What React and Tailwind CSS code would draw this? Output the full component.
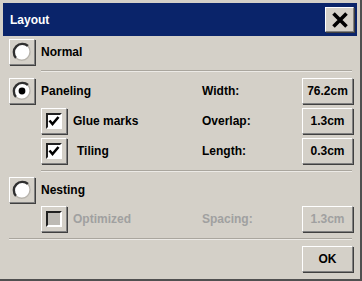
import React from 'react';

const raised =
  'bg-[#d4d0c8] border border-t-white border-l-white border-b-[#808080] border-r-[#808080] shadow-[1px_1px_0_#404040]';

const RadioBox = ({ checked }) => (
  <div className={`${raised} w-[26px] h-[26px] flex items-center justify-center shrink-0`}>
    <svg width="20" height="20" viewBox="0 0 20 20">
      <circle cx="10" cy="10" r="8.5" fill="#fff" />
      <path d="M16 4 A8.5 8.5 0 0 0 4 16" fill="none" stroke="#303030" strokeWidth="2.4" />
      <path d="M4 16 A8.5 8.5 0 0 0 16 4" fill="none" stroke="#b8b4ac" strokeWidth="1.5" />
      {checked && <circle cx="10" cy="10" r="3.4" fill="#000" />}
    </svg>
  </div>
);

const CheckBox = ({ checked, disabled }) => (
  <div className={`${raised} w-[26px] h-[26px] flex items-center justify-center shrink-0`}>
    <div
      className={`w-[16px] h-[16px] border-2 border-t-[#202020] border-l-[#202020] border-b-white border-r-white flex items-center justify-center ${
        disabled ? 'bg-[#bdbab4]' : 'bg-white'
      }`}
    >
      {checked && (
        <svg width="12" height="12" viewBox="0 0 12 12">
          <path d="M1.5 5.5 L4.5 9 L10.5 2" fill="none" stroke="#000" strokeWidth="2.6" />
        </svg>
      )}
    </div>
  </div>
);

const ValueButton = ({ children, disabled }) => (
  <div
    className={`${raised} w-[51px] h-[26px] flex items-center justify-center shrink-0 ${
      disabled ? 'text-[#a0a0a0]' : 'text-black'
    }`}
  >
    {children}
  </div>
);

const Separator = ({ className }) => (
  <div className={`h-[2px] border-t border-t-[#aaa69e] border-b border-b-[#eceae6] ${className}`} />
);

const LayoutDialog = () => {
  return (
    <div className="w-[362px] h-[281px] bg-[#d4d0c8] flex flex-col font-['Liberation_Sans',Arial,sans-serif] text-[12px] font-bold text-black border-r-2 border-b-2 border-r-[#505050] border-b-[#505050]">
      {/* Title bar */}
      <div className="mt-[3px] mx-[3px] h-[33px] bg-[#0a246a] flex items-center justify-between pl-[7px] pr-[3px]">
        <span className="text-white text-[12px] font-bold">Layout</span>
        <div className={`${raised} w-[29px] h-[25px] flex items-center justify-center`}>
          <svg width="18" height="18" viewBox="0 0 18 18">
            <path d="M2.5 2.5 L15.5 15.5 M15.5 2.5 L2.5 15.5" stroke="#000" strokeWidth="3.6" />
          </svg>
        </div>
      </div>

      <div className="ml-[9px] w-[344px] flex flex-col">
        {/* Normal */}
        <div className="mt-[3px] h-[26px] flex items-center">
          <RadioBox />
          <span className="ml-[6px]">Normal</span>
        </div>
        <Separator className="mt-[5px] ml-[32px] mr-[1px]" />

        {/* Paneling */}
        <div className="mt-[6px] h-[26px] flex items-center">
          <div className="w-[193px] flex items-center">
            <RadioBox checked />
            <span className="ml-[6px]">Paneling</span>
          </div>
          <span className="w-[100px]">Width:</span>
          <ValueButton>76.2cm</ValueButton>
        </div>
        <div className="mt-[4px] h-[26px] flex items-center">
          <div className="w-[193px] pl-[32px] flex items-center">
            <CheckBox checked />
            <span className="ml-[6px]">Glue marks</span>
          </div>
          <span className="w-[100px]">Overlap:</span>
          <ValueButton>1.3cm</ValueButton>
        </div>
        <div className="mt-[4px] h-[26px] flex items-center">
          <div className="w-[193px] pl-[32px] flex items-center">
            <CheckBox checked />
            <span className="ml-[10px]">Tiling</span>
          </div>
          <span className="w-[100px]">Length:</span>
          <ValueButton>0.3cm</ValueButton>
        </div>
        <Separator className="mt-[6px] ml-[32px] mr-[1px]" />

        {/* Nesting */}
        <div className="mt-[5px] h-[26px] flex items-center">
          <RadioBox />
          <span className="ml-[6px]">Nesting</span>
        </div>
        <div className="mt-[3px] h-[26px] flex items-center">
          <div className="w-[193px] pl-[32px] flex items-center">
            <CheckBox disabled />
            <span className="ml-[6px] text-[#a0a0a0]">Optimized</span>
          </div>
          <span className="w-[100px] text-[#a0a0a0]">Spacing:</span>
          <ValueButton disabled>1.3cm</ValueButton>
        </div>
        <Separator className="mt-[6px] mr-[1px]" />

        <div className="mt-[6px] flex justify-end">
          <ValueButton>OK</ValueButton>
        </div>
      </div>
    </div>
  );
};

export default function App() {
  return <LayoutDialog />;
}
